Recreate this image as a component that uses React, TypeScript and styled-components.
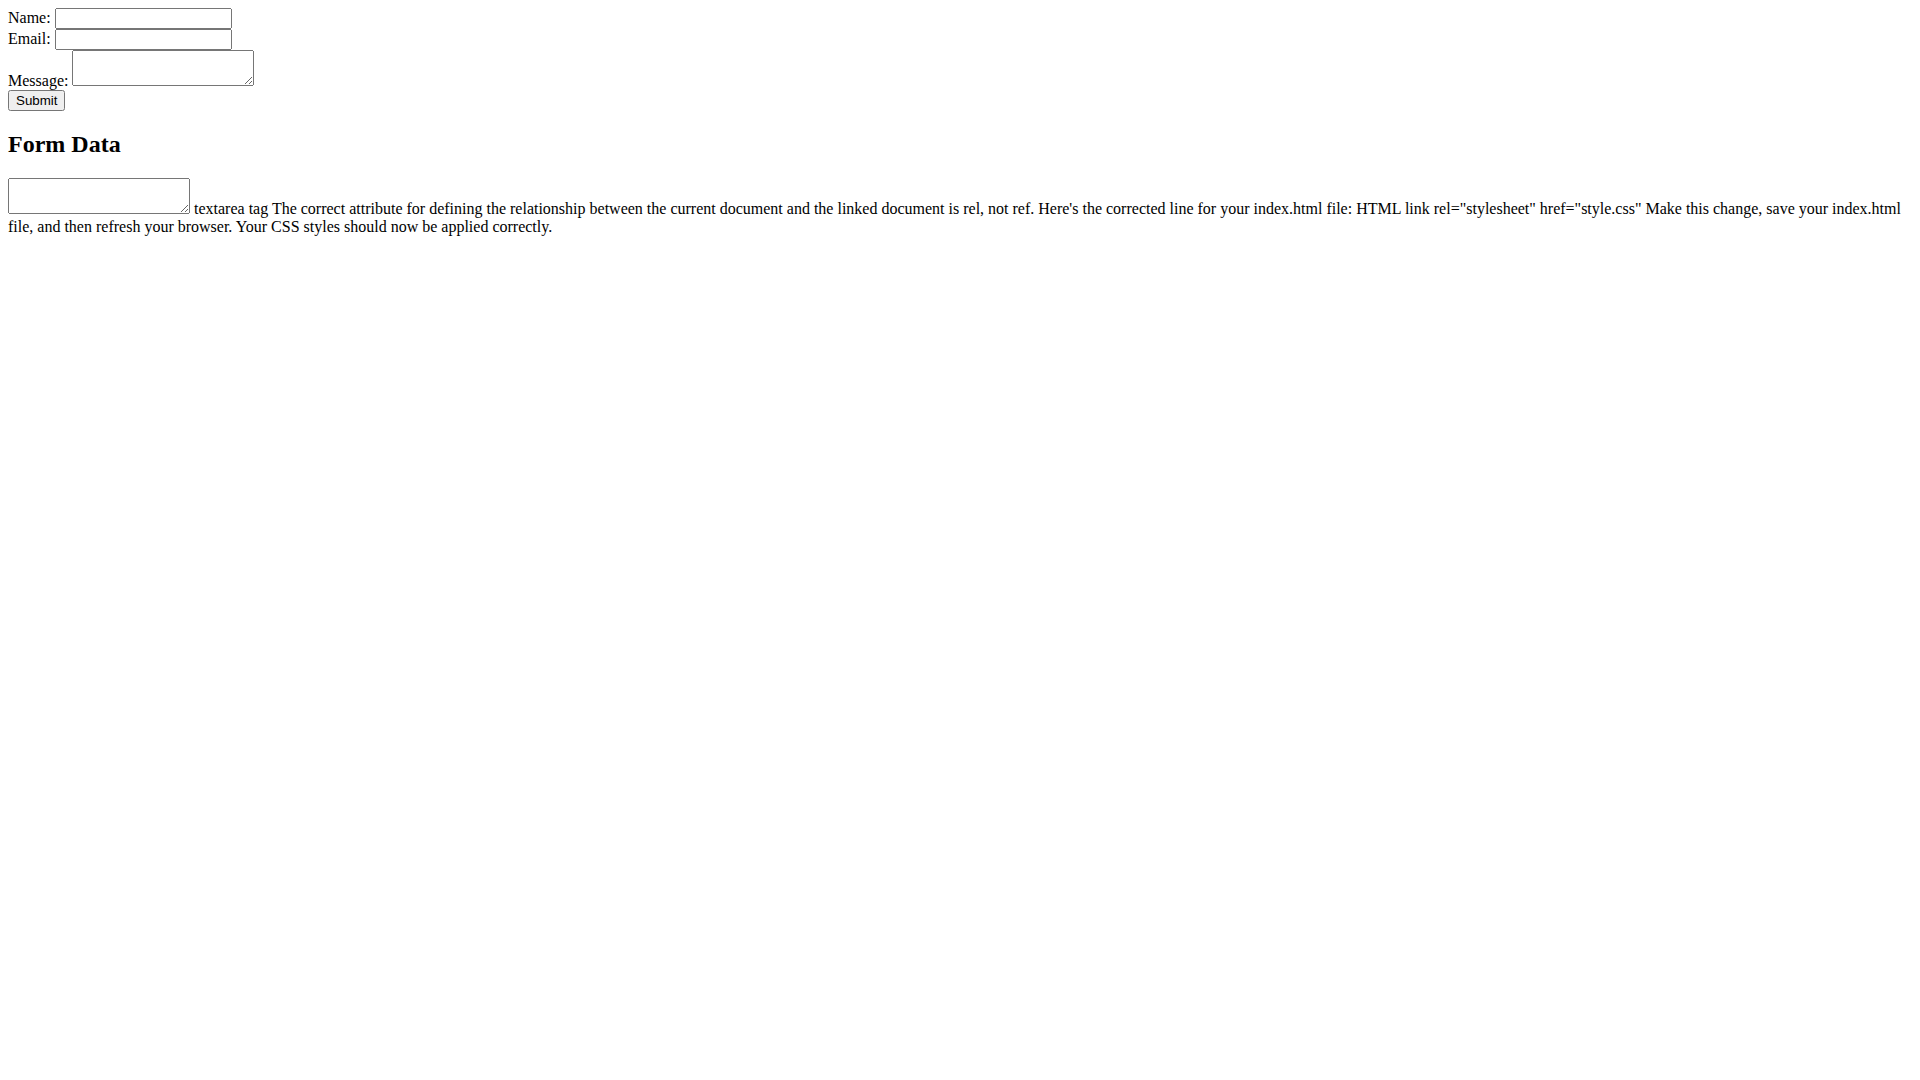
import React from "react";
import styled, { createGlobalStyle } from "styled-components";

const GlobalStyle = createGlobalStyle`
  body {
    margin: 8px;
    background: #fff;
    color: #000;
    font-family: "Liberation Serif", "Times New Roman", serif;
    font-size: 16px;
  }
`;

const Row = styled.div``;

const TextInput = styled.input`
  box-sizing: border-box;
  width: 177px;
  font-family: "Liberation Sans", Arial, sans-serif;
`;

const TextArea = styled.textarea``;

const SubmitButton = styled.button`
  font-family: "Liberation Sans", Arial, sans-serif;
`;

const Heading = styled.h2`
  margin: 20px 0;
  font-size: 24px;
  font-weight: bold;
`;

export default function App() {
  return (
    <>
      <GlobalStyle />
      <form onSubmit={(event) => event.preventDefault()}>
        <Row>
          <label htmlFor="name">Name:</label>{" "}
          <TextInput type="text" id="name" name="name" />
        </Row>
        <Row>
          <label htmlFor="email">Email:</label>{" "}
          <TextInput type="email" id="email" name="email" />
        </Row>
        <Row>
          <label htmlFor="message">Message:</label>{" "}
          <TextArea id="message" name="message" />
        </Row>
        <SubmitButton type="submit">Submit</SubmitButton>
      </form>
      <Heading id="form-data">Form Data</Heading>
      <Row>
        <TextArea name="formData" aria-labelledby="form-data" /> textarea tag
        The correct attribute for defining the relationship between the current
        document and the linked document is rel, not ref. Here's the corrected
        line for your index.html file: HTML link rel="stylesheet"
        href="style.css" Make this change, save your index.html file, and then
        refresh your browser. Your CSS styles should now be applied correctly.
      </Row>
    </>
  );
}
